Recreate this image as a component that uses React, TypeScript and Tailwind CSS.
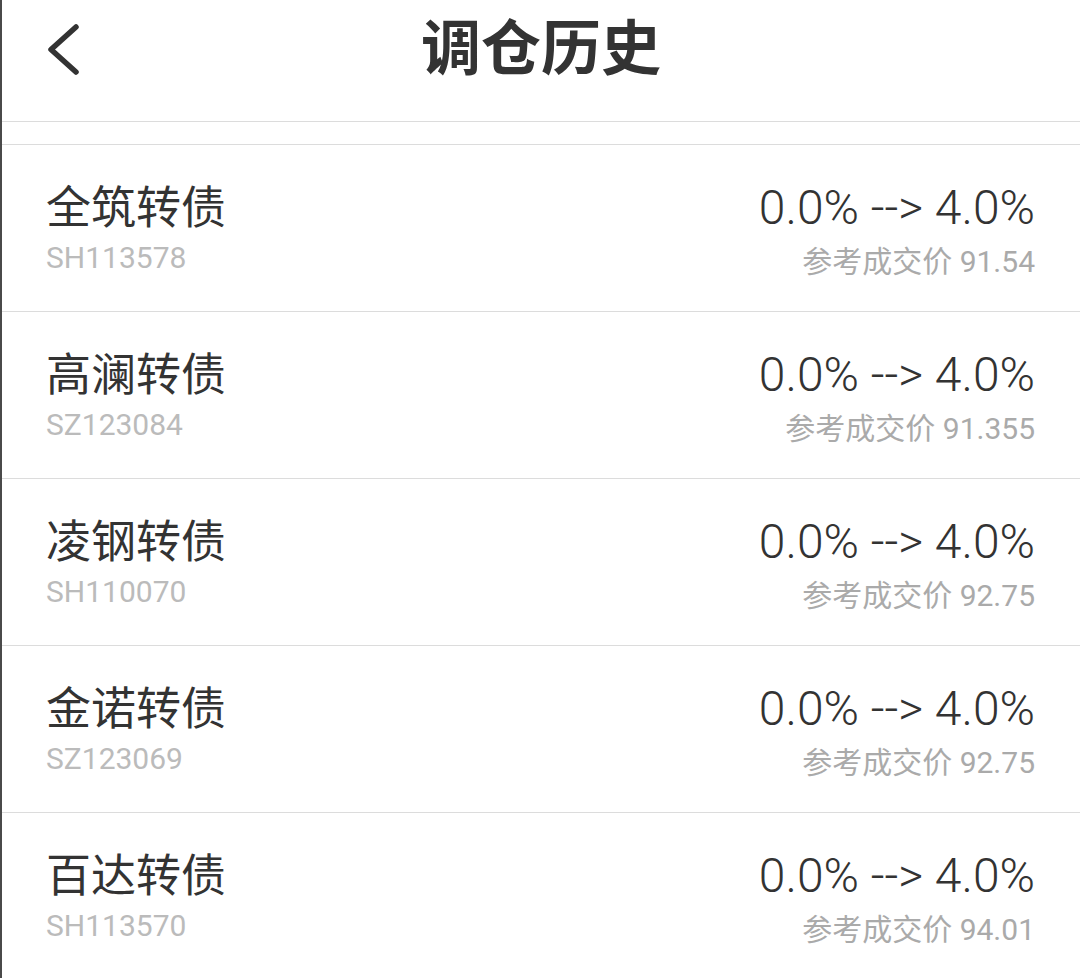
import React from "react";

const rows = [
  { name: "全筑转债", code: "SH113578", price: "91.54" },
  { name: "高澜转债", code: "SZ123084", price: "91.355" },
  { name: "凌钢转债", code: "SH110070", price: "92.75" },
  { name: "金诺转债", code: "SZ123069", price: "92.75" },
  { name: "百达转债", code: "SH113570", price: "94.01" },
];

const font = { fontFamily: "Roboto, 'Noto Sans CJK SC', sans-serif" };

export default function App() {
  return (
    <div
      className="w-[1080px] h-[978px] overflow-hidden bg-white border-l-2 border-[#4a4a4a]"
      style={font}
    >
      <div className="relative h-[122px] flex items-center justify-center pb-[21px] border-b border-[#dcdcdc]">
        <svg
          className="absolute left-[44px] top-[24px]"
          width="38"
          height="52"
          viewBox="0 0 38 52"
          fill="none"
          stroke="#333"
          strokeWidth="5.5"
          strokeLinecap="round"
          strokeLinejoin="round"
        >
          <path d="M30 3 L5 25.5 L30 48" />
        </svg>
        <div className="text-[60px] font-bold text-[#333] leading-none">调仓历史</div>
      </div>
      <div className="h-[23px] border-b border-[#dcdcdc]" />
      {rows.map((r) => (
        <div
          key={r.code}
          className="h-[167px] flex justify-between items-start pl-[44px] pr-[45px] border-b border-[#dcdcdc]"
        >
          <div className="flex flex-col pt-[38px]">
            <div className="text-[45px] leading-[52px] text-[#333]">{r.name}</div>
            <div className="text-[30px] leading-[36px] text-[#bbbbbb] mt-[5px]">{r.code}</div>
          </div>
          <div className="flex flex-col items-end pt-[35px]">
            <div className="text-[48px] leading-[56px] font-light text-[#333]">0.0% --&gt; 4.0%</div>
            <div className="text-[30px] leading-[34px] text-[#aaaaaa] mt-[9px]">参考成交价 {r.price}</div>
          </div>
        </div>
      ))}
    </div>
  );
}
